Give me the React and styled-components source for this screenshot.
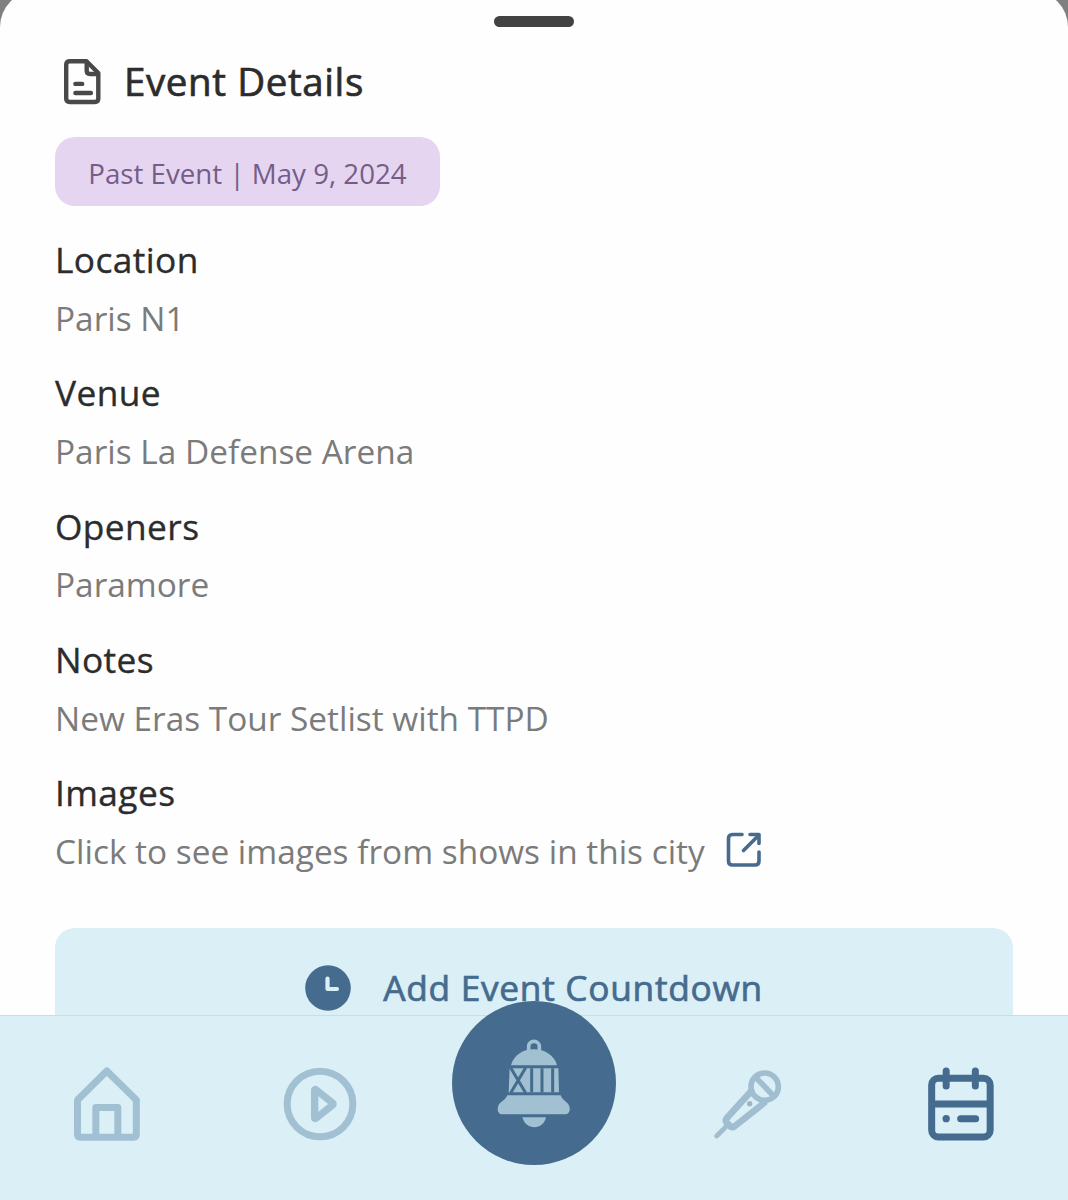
import React from "react";
import styled, { createGlobalStyle } from "styled-components";

const fields = [
  { label: "Location", value: "Paris N1" },
  { label: "Venue", value: "Paris La Defense Arena" },
  { label: "Openers", value: "Paramore" },
  { label: "Notes", value: "New Eras Tour Setlist with TTPD" },
];

function DocumentIcon() {
  return (
    <svg width="42" height="50" viewBox="0 0 42 50" fill="none" stroke="#4b4849" strokeWidth="4.4" strokeLinecap="round" strokeLinejoin="round">
      <path d="M8 4.2H24.5L36.3 16V41.5Q36.3 45 32.8 45H8Q4.2 45 4.2 41.5V7.7Q4.2 4.2 8 4.2Z" />
      <path d="M24.7 5V13.5Q24.7 17 28 17H35.5" />
      <path d="M13.4 26.9H20.2M13.4 36H28.9" />
    </svg>
  );
}

function ExternalLinkIcon() {
  return (
    <svg width="38" height="38" viewBox="0 0 38 38" fill="none" stroke="#456b8e" strokeWidth="3.6" strokeLinecap="round" strokeLinejoin="round">
      <path d="M17 3.5H7.5Q3.5 3.5 3.5 7.5V30Q3.5 34 7.5 34H30Q34 34 34 30V21" />
      <path d="M18.5 19.5L33 5" />
      <path d="M25 3.5H34V12.5" />
    </svg>
  );
}

function ClockIcon() {
  return (
    <svg width="46" height="46" viewBox="0 0 46 46" fill="none">
      <circle cx="23" cy="23" r="22.8" fill="#456b8e" />
      <path d="M22.5 13.5V24H32" stroke="#daeff6" strokeWidth="4.2" strokeLinecap="round" strokeLinejoin="round" />
    </svg>
  );
}

function HomeIcon() {
  return (
    <svg width="66" height="74" viewBox="72 51 198 222" fill="none" stroke="#a1c1d3" strokeWidth="21" strokeLinejoin="round">
      <path d="M82.5 150L170.5 63L259 150V253Q259 261.5 250.5 261.5H91Q82.5 261.5 82.5 253Z" />
      <path d="M137.5 261V172.5H203.5V261" />
    </svg>
  );
}

function PlayIcon() {
  return (
    <svg width="74" height="74" viewBox="700 51 222 222" fill="none" stroke="#a1c1d3" strokeWidth="21" strokeLinejoin="round">
      <circle cx="811" cy="162" r="98.5" />
      <path d="M795 119Q797 118 800 120L849 159Q851 162 849 165L800 204Q797 206 795 205Z" strokeWidth="22" />
    </svg>
  );
}

function BellIcon() {
  return (
    <svg width="75" height="93" viewBox="169 170 225 279" fill="#a1c1d3">
      <path d="M267 212V198A16 15 0 0 1 299 198V212" fill="none" stroke="#a1c1d3" strokeWidth="11" />
      <path d="M214 255C222 224 250 207 282 207S344 224 352 255Z" />
      <path d="M210 264H356L358 336H207Z" />
      <g fill="none" stroke="#456b8e" strokeWidth="9">
        <path d="M213 262L258 338M258 262L213 338" />
        <path d="M276 264V336M307 264V336M339 264V336" />
      </g>
      <path d="M203 345H363C367 356 374 361 382 367C394 377 394 402 375 402H189C170 402 171 377 182 367C191 361 198 356 203 345Z" />
      <path d="M248 411H319C315 430 301 441 284 441S253 430 248 411Z" />
    </svg>
  );
}

function MicIcon() {
  return (
    <svg width="68" height="70" viewBox="70 58 204 210" fill="none" stroke="#a0bed0" strokeWidth="20" strokeLinecap="round" strokeLinejoin="round">
      <circle cx="222" cy="111" r="41" strokeWidth="17" />
      <path d="M198 86L246 136" strokeWidth="17" />
      <path d="M182 124L108 206Q103 213 108 219L119 230Q125 235 133 229L220 160" />
      <path d="M105 232L78 259" strokeWidth="14" />
      <circle cx="177" cy="162" r="8" fill="#a0b4c4" stroke="none" />
    </svg>
  );
}

function CalendarIcon() {
  return (
    <svg width="66" height="74" viewBox="715 51 198 222" fill="none" stroke="#456b8e" strokeWidth="21" strokeLinecap="round">
      <rect x="726" y="85" width="175.5" height="176" rx="20" />
      <path d="M769.5 63V108M857 63V108M728 162H900M813 206H858" />
      <circle cx="769.5" cy="206" r="11" fill="#456b8e" stroke="none" />
    </svg>
  );
}

function App() {
  return (
    <Screen>
      <GlobalStyle />
      <Sheet>
        <Handle />
        <Header>
          <DocumentIcon />
          <Title>Event Details</Title>
        </Header>
        <Badge>Past Event | May 9, 2024</Badge>
        {fields.map((field) => (
          <Field key={field.label}>
            <Label>{field.label}</Label>
            <Value>{field.value}</Value>
          </Field>
        ))}
        <Field>
          <Label>Images</Label>
          <Value>
            Click to see images from shows in this city
            <ExternalLinkIcon />
          </Value>
        </Field>
        <CountdownButton>
          <ClockIcon />
          <span>Add Event Countdown</span>
        </CountdownButton>
      </Sheet>
      <TabBar>
        <Tab aria-label="Home">
          <HomeIcon />
        </Tab>
        <Tab aria-label="Play">
          <PlayIcon />
        </Tab>
        <Tab aria-label="Alerts">
          <BellCircle>
            <BellIcon />
          </BellCircle>
        </Tab>
        <Tab aria-label="Music">
          <MicIcon />
        </Tab>
        <Tab aria-label="Calendar">
          <CalendarIcon />
        </Tab>
      </TabBar>
    </Screen>
  );
}

const GlobalStyle = createGlobalStyle`
  * {
    box-sizing: border-box;
  }

  body {
    margin: 0;
    background-color: #808080;
    font-family: "Open Sans", "Noto Sans", sans-serif;
  }
`;

const Screen = styled.div`
  display: flex;
  flex-direction: column;
  height: 1200px;
  overflow: hidden;
`;

const Sheet = styled.main`
  display: flex;
  flex-direction: column;
  align-items: flex-start;
  height: 1024px;
  flex-shrink: 0;
  margin-top: -9px;
  padding: 25px 55px 0;
  border-radius: 36px 36px 0 0;
  background-color: #fefefe;
  overflow: hidden;
`;

const Handle = styled.div`
  flex-shrink: 0;
  align-self: center;
  width: 80px;
  height: 11px;
  border-radius: 6px;
  background-color: #424242;
`;

const Header = styled.header`
  display: flex;
  align-items: center;
  gap: 20px;
  height: 50px;
  flex-shrink: 0;
  margin: 30px 0 0 7px;
`;

const Title = styled.h1`
  margin: -2px 0 0;
  color: #2c2c2c;
  font-size: 38.5px;
  font-weight: 500;
  letter-spacing: 0.6px;
  line-height: 50px;
  -webkit-text-stroke: 0.7px currentColor;
`;

const Badge = styled.div`
  width: 385px;
  height: 69px;
  flex-shrink: 0;
  margin: 30px 0 25px;
  border-radius: 20px;
  background-color: #e5d5f1;
  color: #755d88;
  font-size: 27.7px;
  line-height: 72px;
  text-align: center;
`;

const Field = styled.section`
  height: 133.33px;
  flex-shrink: 0;
`;

const Label = styled.h2`
  margin: 0;
  color: #2c2c2c;
  font-size: 35.3px;
  font-weight: 500;
  letter-spacing: 0.4px;
  line-height: 56px;
  -webkit-text-stroke: 0.35px currentColor;
`;

const Value = styled.p`
  display: flex;
  align-items: center;
  gap: 20px;
  margin: 1.6px 0 0;
  color: #7b7b7b;
  font-size: 33.4px;
  line-height: 59px;

  svg {
    margin-bottom: 2px;
  }
`;

const CountdownButton = styled.button`
  display: flex;
  align-items: center;
  justify-content: center;
  gap: 32px;
  align-self: stretch;
  height: 120px;
  flex-shrink: 0;
  margin-top: 30px;
  padding: 0;
  border: none;
  border-radius: 20px;
  background-color: #daeff6;
  color: #456b8e;
  font-family: inherit;
  font-size: 35.3px;
  font-weight: 500;
  letter-spacing: 0.7px;
  -webkit-text-stroke: 0.7px currentColor;
  cursor: pointer;

  span {
    padding-bottom: 2px;
  }
`;

const TabBar = styled.nav`
  display: grid;
  grid-template-columns: repeat(5, 1fr);
  height: 185px;
  flex-shrink: 0;
  border-top: 1px solid #cbdde4;
  background-color: #daeff6;
`;

const Tab = styled.a`
  display: flex;
  justify-content: center;
  align-items: center;
  height: 176px;
  cursor: pointer;
`;

const BellCircle = styled.div`
  display: flex;
  justify-content: center;
  align-items: center;
  width: 164px;
  height: 164px;
  margin-top: -42px;
  border-radius: 50%;
  background-color: #456b8e;
`;

export default App;
